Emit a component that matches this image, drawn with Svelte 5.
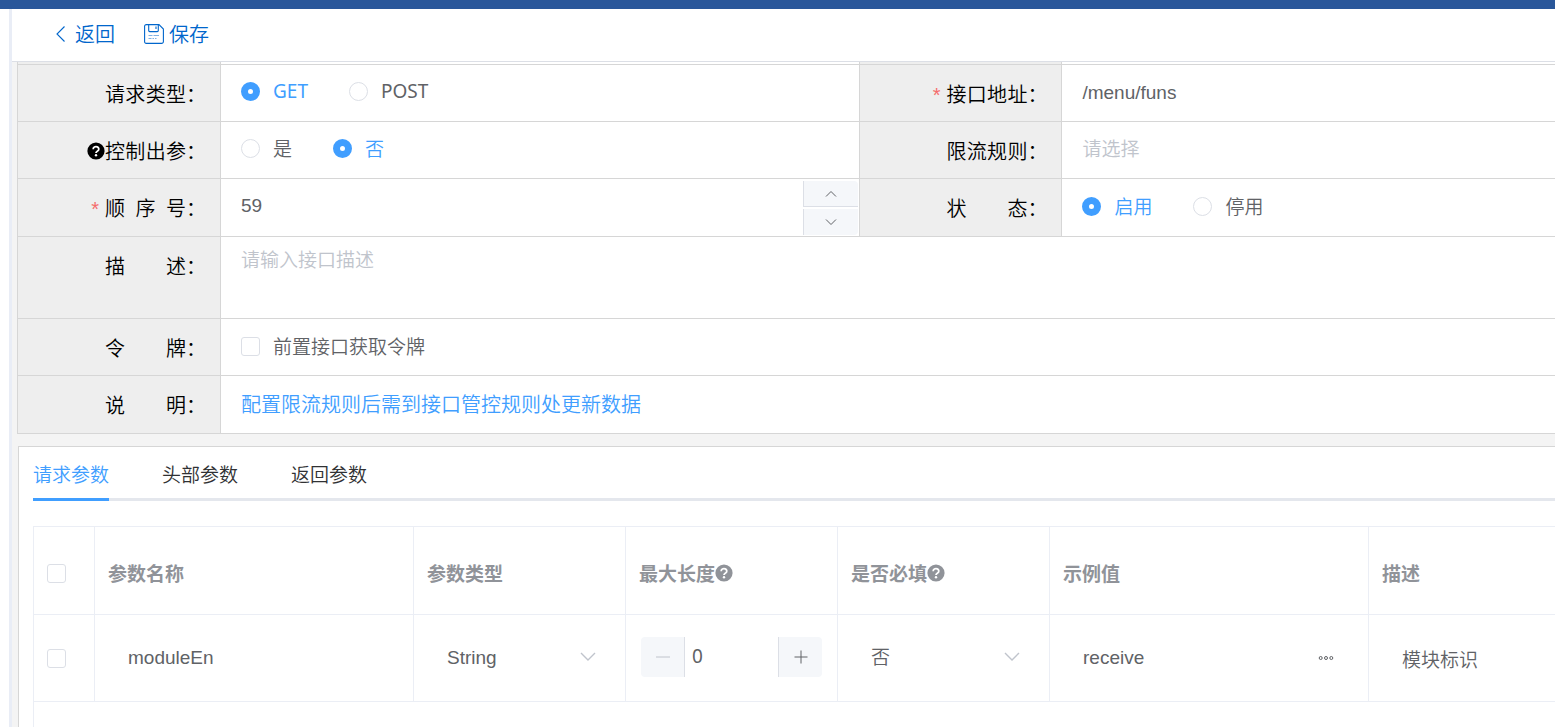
<!-- ============================================================
  App.svelte
  Interface editor: toolbar, basic settings form and the
  request / header / response parameter tables.
  ============================================================ -->
<script lang="ts">
  // ── Form state ───────────────────────────────────────────
  let method = $state('GET');
  let controlOutput = $state('否');
  let order = $state(59);
  let url = $state('/menu/funs');
  let limitRule = $state('');
  let status = $state('启用');
  let description = $state('');
  let useToken = $state(false);

  // ── Parameter table ──────────────────────────────────────
  const tabs = ['请求参数', '头部参数', '返回参数'];
  let activeTab = $state('请求参数');

  const columns = [
    { label: '参数名称', help: false },
    { label: '参数类型', help: false },
    { label: '最大长度', help: true },
    { label: '是否必填', help: true },
    { label: '示例值', help: false },
    { label: '描述', help: false },
  ];

  let params = $state([
    { checked: false, name: 'moduleEn', type: 'String', max: 0, required: '否', example: 'receive', desc: '模块标识' },
  ]);
</script>

{#snippet helpIcon()}
  <svg class="help" width="18" height="18" viewBox="0 0 18 18" aria-hidden="true">
    <circle cx="9" cy="9" r="8.6" fill="currentColor" />
    <path class="help__mark" d="M6.200 7.200a2.800 2.400 0 1 1 4.400 1.800c-1 .6-1.600 .8-1.600 2" />
    <circle class="help__dot" cx="9" cy="13.3" r="1.2" />
  </svg>
{/snippet}

{#snippet chevron()}
  <svg class="select__arrow" width="16" height="10" viewBox="0 0 16 10" aria-hidden="true">
    <path d="M1 1l7 7 7-7" />
  </svg>
{/snippet}

{#snippet label(text: string, target: string, required = false, help = false)}
  <div class="form__label">
    {#if required}<span class="form__star">*</span>{/if}
    {#if help}{@render helpIcon()}{/if}
    <label for={target}><span class="form__name">{text}</span>：</label>
  </div>
{/snippet}

<div class="topbar"></div>

<main class="shell">
  <div class="toolbar">
    <button type="button" class="toolbar__btn">
      <svg width="20" height="20" viewBox="0 0 20 20" aria-hidden="true">
        <path d="M14.500 2.500L7 10l7.500 7.500" />
      </svg>
      返回
    </button>
    <button type="button" class="toolbar__btn">
      <svg width="20" height="20" viewBox="0 0 20 20" aria-hidden="true">
        <path d="M2.300 .600h12.700l4.400 4.400v12.600a1.800 1.800 0 0 1-1.800 1.800h-15.300a1.700 1.700 0 0 1-1.700-1.800v-15.200a1.700 1.700 0 0 1 1.700-1.800z" />
        <path d="M4.700 .600v6a1 1 0 0 0 1 1h7.600a1 1 0 0 0 1-1v-6M12 2.500v2.500" />
        <path class="faint" d="M4.500 11.500h4M9.500 11.500h5.500M4.500 14.500h3M8.500 14.500h1.500M11 14.500h1.500" />
      </svg>
      保存
    </button>
  </div>

  <!-- Basic settings -->
  <form class="form" onsubmit={(e) => e.preventDefault()}>
    <div class="form__label form__label--tail"></div>
    <div class="form__field form__field--tail"></div>
    <div class="form__label form__label--tail"></div>
    <div class="form__field form__field--tail form__field--last"></div>

    {@render label('请求类型', 'method')}
    <div class="form__field">
      <div class="choices choices--latin">
        <label class="choice"><input id="method" type="radio" bind:group={method} value="GET" /><span>GET</span></label>
        <label class="choice"><input type="radio" bind:group={method} value="POST" /><span>POST</span></label>
      </div>
    </div>
    {@render label('接口地址', 'url', true)}
    <div class="form__field form__field--last">
      <input id="url" class="text" type="text" bind:value={url} />
    </div>

    {@render label('控制出参', 'control', false, true)}
    <div class="form__field">
      <div class="choices">
        <label class="choice"><input id="control" type="radio" bind:group={controlOutput} value="是" /><span>是</span></label>
        <label class="choice"><input type="radio" bind:group={controlOutput} value="否" /><span>否</span></label>
      </div>
    </div>
    {@render label('限流规则', 'limit')}
    <div class="form__field form__field--last">
      <input id="limit" class="text" type="text" placeholder="请选择" bind:value={limitRule} />
    </div>

    {@render label('顺 序 号', 'order', true)}
    <div class="form__field form__field--number">
      <input id="order" class="text" type="number" bind:value={order} />
      <div class="spinner">
        <button type="button" aria-label="增加" onclick={() => order++}>
          <svg width="12" height="8" viewBox="0 0 12 8" aria-hidden="true"><path d="M1 6.500l5-5 5 5" /></svg>
        </button>
        <button type="button" aria-label="减少" onclick={() => order--}>
          <svg width="12" height="8" viewBox="0 0 12 8" aria-hidden="true"><path d="M1 1.500l5 5 5-5" /></svg>
        </button>
      </div>
    </div>
    {@render label('状 态', 'status')}
    <div class="form__field form__field--last">
      <div class="choices choices--tall">
        <label class="choice"><input id="status" type="radio" bind:group={status} value="启用" /><span>启用</span></label>
        <label class="choice"><input type="radio" bind:group={status} value="停用" /><span>停用</span></label>
      </div>
    </div>

    {@render label('描 述', 'desc')}
    <div class="form__field form__field--wide">
      <textarea id="desc" class="text" placeholder="请输入接口描述" bind:value={description}></textarea>
    </div>

    {@render label('令 牌', 'token')}
    <div class="form__field form__field--wide">
      <div class="choices choices--tall">
        <label class="choice"><input id="token" type="checkbox" bind:checked={useToken} /><span>前置接口获取令牌</span></label>
      </div>
    </div>

    {@render label('说 明', 'note')}
    <div class="form__field form__field--wide">
      <output id="note" class="note">配置限流规则后需到接口管控规则处更新数据</output>
    </div>
  </form>

  <!-- Parameters -->
  <section class="panel">
    <div class="tabs" role="tablist">
      {#each tabs as tab}
        <button
          type="button"
          role="tab"
          class="tabs__item"
          class:tabs__item--active={tab === activeTab}
          aria-selected={tab === activeTab}
          onclick={() => (activeTab = tab)}
        >{tab}</button>
      {/each}
    </div>

    <div class="grid">
      <table>
        <colgroup>
          <col class="col-check" />
          <col class="col-long" />
          <col class="col-short" />
          <col class="col-short" />
          <col class="col-short" />
          <col class="col-long" />
          <col />
        </colgroup>
        <thead>
          <tr>
            <th><input type="checkbox" aria-label="全选" /></th>
            {#each columns as column}
              <th>
                <span class="head">{column.label}{#if column.help}{@render helpIcon()}{/if}</span>
              </th>
            {/each}
          </tr>
        </thead>
        <tbody>
          {#each params as row}
            <tr>
              <td><input type="checkbox" aria-label="选择" bind:checked={row.checked} /></td>
              <td><input class="text" type="text" aria-label="参数名称" bind:value={row.name} /></td>
              <td>
                <div class="select">
                  <select class="text" aria-label="参数类型" bind:value={row.type}>
                    <option>String</option>
                  </select>
                  {@render chevron()}
                </div>
              </td>
              <td>
                <div class="stepper">
                  <button type="button" aria-label="减少" disabled={row.max <= 0} onclick={() => row.max--}>
                    <svg width="14" height="14" viewBox="0 0 14 14" aria-hidden="true"><path d="M0 7h14" /></svg>
                  </button>
                  <input type="number" aria-label="最大长度" bind:value={row.max} />
                  <button type="button" aria-label="增加" onclick={() => row.max++}>
                    <svg width="14" height="14" viewBox="0 0 14 14" aria-hidden="true"><path d="M.5 7h13M7 .5v13" /></svg>
                  </button>
                </div>
              </td>
              <td>
                <div class="select">
                  <select class="text" aria-label="是否必填" bind:value={row.required}>
                    <option>否</option>
                    <option>是</option>
                  </select>
                  {@render chevron()}
                </div>
              </td>
              <td>
                <div class="example">
                  <input class="text" type="text" aria-label="示例值" bind:value={row.example} />
                  <button type="button" aria-label="更多">
                    <svg width="16" height="6" viewBox="0 0 16 6" aria-hidden="true">
                      <circle cx="2.700" cy="3" r="1.500" /><circle cx="8" cy="3" r="1.500" /><circle cx="13.300" cy="3" r="1.500" />
                    </svg>
                  </button>
                </div>
              </td>
              <td><input class="text" type="text" aria-label="描述" bind:value={row.desc} /></td>
            </tr>
          {/each}
        </tbody>
      </table>
    </div>
  </section>
</main>

<style>
  :global(body) {
    background: #fff;
    font-family: 'Noto Sans', 'Noto Sans CJK SC', sans-serif;
    font-size: 19px;
    font-weight: 350;
    color: #606266;
  }

  :global(*) {
    box-sizing: border-box;
  }

  button,
  input,
  select,
  textarea {
    margin: 0;
    padding: 0;
    border: 0;
    outline: 0;
    background: none;
    color: inherit;
    font: inherit;
  }

  button {
    cursor: pointer;
  }

  svg {
    display: block;
    flex: none;
    fill: none;
    stroke: currentColor;
  }

  /* ── Frame ───────────────────────────────────────────────── */
  .topbar {
    height: 9px;
    background: #2a579a;
  }

  .shell {
    display: flex;
    flex-direction: column;
    height: calc(100vh - 9px);
    margin-left: 9px;
    border-left: 3px solid #e9edf6;
    background: #f4f4f4;
    overflow: hidden;
  }

  .toolbar {
    display: flex;
    flex: none;
    gap: 29px;
    height: 53px;
    padding: 0 38px 3px;
    border-bottom: 1px solid #dcdfe6;
    background: #fff;
  }

  .toolbar__btn {
    display: flex;
    align-items: center;
    gap: 5px;
    color: #0066cc;
    font-size: 20px;
  }

  .toolbar__btn svg {
    stroke-width: 1.1;
  }

  .toolbar__btn .faint {
    opacity: 0.5;
  }

  /* ── Settings form ───────────────────────────────────────── */
  .form {
    display: grid;
    flex: none;
    grid-template-columns: 203px 640fr 202px 493fr;
    margin-left: 5px;
    border-left: 1px solid #d6d6d6;
    background: #fff;
  }

  .form__label {
    display: flex;
    justify-content: flex-end;
    padding: 15px 14px 0 0;
    border-right: 1px solid #d6d6d6;
    border-bottom: 1px solid #d6d6d6;
    background: #eee;
    color: #000;
    font-size: 20px;
    line-height: 30px;
  }

  .form__label .help {
    margin-top: 5px;
  }

  /* Spaced names stretch to the width of four characters */
  .form__name {
    display: inline-block;
    width: 81px;
    text-align-last: justify;
  }

  .form__star {
    margin-right: 6px;
    color: #f56c6c;
    font-family: 'Liberation Sans', sans-serif;
  }

  .form__field {
    min-width: 0;
    min-height: 57px;
    border-right: 1px solid #d6d6d6;
    border-bottom: 1px solid #d6d6d6;
  }

  .form__field--wide {
    grid-column: span 3;
    border-right: 0;
  }

  .form__field--last {
    border-right: 0;
  }

  .form__label--tail,
  .form__field--tail {
    min-height: 0;
    height: 3px;
    padding: 0;
  }

  .form__field--number {
    display: flex;
    height: 58px;
  }

  .form .text {
    display: block;
    width: 100%;
    height: 56px;
    padding: 0 20px;
  }

  .form .form__field--number .text {
    height: 54px;
  }

  .form textarea.text {
    height: 81px;
    padding-top: 10px;
    line-height: 28px;
    resize: none;
  }

  .text {
    font-family: 'Liberation Sans', 'Noto Sans CJK SC', sans-serif;
  }

  .text::placeholder {
    color: #c0c4cc;
  }

  .note {
    display: block;
    padding-left: 20px;
    color: #409eff;
    font-size: 20px;
    line-height: 57px;
  }

  input[type='number'] {
    appearance: textfield;
  }

  input::-webkit-inner-spin-button {
    appearance: none;
  }

  .spinner {
    display: grid;
    flex: none;
    grid-template-rows: 26px 26px;
    gap: 2px;
    width: 56px;
    padding: 2px 1px 0 0;
  }

  .spinner button {
    display: grid;
    place-items: center;
    border-left: 1px solid #dcdfe6;
    background: #f5f7fa;
  }

  .spinner button:first-child {
    border-bottom: 1px solid #dcdfe6;
    border-top-right-radius: 4px;
  }

  .spinner button:last-child {
    border-bottom-right-radius: 4px;
  }

  /* ── Radios and tick boxes ───────────────────────────────── */
  .choices {
    display: flex;
    align-items: center;
    gap: 41px;
    height: 52px;
    padding-left: 20px;
  }

  .choices--tall {
    height: 54px;
  }

  .choices--latin {
    font-weight: 400;
  }

  .choice {
    display: flex;
    align-items: center;
    gap: 13px;
  }

  input[type='radio'],
  input[type='checkbox'] {
    appearance: none;
    display: block;
    flex: none;
    width: 19px;
    height: 19px;
    border: 1px solid #dcdfe6;
    border-radius: 3px;
    background: #fff;
  }

  input[type='radio'] {
    border-radius: 50%;
  }

  input[type='radio']:checked {
    border: 7px solid #409eff;
  }

  input[type='checkbox']:checked {
    border-color: #409eff;
    background: #409eff;
  }

  input[type='radio']:checked + span {
    color: #409eff;
  }

  /* ── Help icon ───────────────────────────────────────────── */
  .help {
    stroke: none;
  }

  .help__mark {
    fill: none;
    stroke: #fff;
    stroke-width: 1.8;
  }

  .help__dot {
    fill: #fff;
  }

  /* ── Parameter panel ─────────────────────────────────────── */
  .panel {
    display: flex;
    flex: 1;
    flex-direction: column;
    margin: 12px 0 0 6px;
    padding-left: 14px;
    border-top: 1px solid #d6d6d6;
    border-left: 1px solid #d6d6d6;
    background: #fff;
  }

  .tabs {
    display: flex;
    flex: none;
    gap: 53px;
    height: 54px;
    box-shadow: inset 0 -3px #e4e7ed;
  }

  .tabs__item {
    border-bottom: 3px solid transparent;
    padding-top: 2px;
    color: #303133;
  }

  .tabs__item--active {
    border-color: #409eff;
    color: #409eff;
  }

  .grid {
    flex: 1;
    margin-top: 25px;
    border-top: 1px solid #ebeef5;
    border-left: 1px solid #ebeef5;
  }

  table {
    width: 100%;
    table-layout: fixed;
    border-spacing: 0;
  }

  .col-check {
    width: 61px;
  }

  .col-short {
    width: 212px;
  }

  .col-long {
    width: 319px;
  }

  th,
  td {
    height: 87px;
    padding: 0 13px;
    border-right: 1px solid #ebeef5;
    border-bottom: 1px solid #ebeef5;
    text-align: left;
    vertical-align: middle;
  }

  th:last-child,
  td:last-child {
    border-right: 0;
  }

  th {
    height: 88px;
    padding-top: 5px;
    color: #909399;
    font-weight: 700;
  }

  td .text {
    width: 100%;
    height: 40px;
    padding-left: 20px;
  }

  .head {
    display: flex;
    align-items: center;
  }

  .select {
    display: grid;
    align-items: center;
    padding-bottom: 2px;
  }

  .select > :global(*) {
    grid-area: 1 / 1;
  }

  select {
    appearance: none;
  }

  .select__arrow {
    justify-self: end;
    margin-right: 16px;
    color: #c0c4cc;
    pointer-events: none;
    stroke-width: 1.4;
  }

  .stepper {
    display: flex;
    height: 40px;
    margin: 0 2px 2px;
  }

  .stepper button {
    display: grid;
    flex: none;
    place-items: center;
    width: 44px;
    border-left: 1px solid #dcdfe6;
    border-radius: 0 4px 4px 0;
    background: #f5f7fa;
  }

  .stepper button:first-child {
    border-left: 0;
    border-right: 1px solid #dcdfe6;
    border-radius: 4px 0 0 4px;
  }

  .stepper button:disabled {
    color: #c0c4cc;
  }

  .stepper input {
    flex: 1;
    min-width: 0;
    padding: 0 0 2px 7px;
    font-weight: 400;
  }

  .example {
    display: flex;
    align-items: center;
  }

  .example button {
    padding: 0 21px 0 8px;
  }
</style>
